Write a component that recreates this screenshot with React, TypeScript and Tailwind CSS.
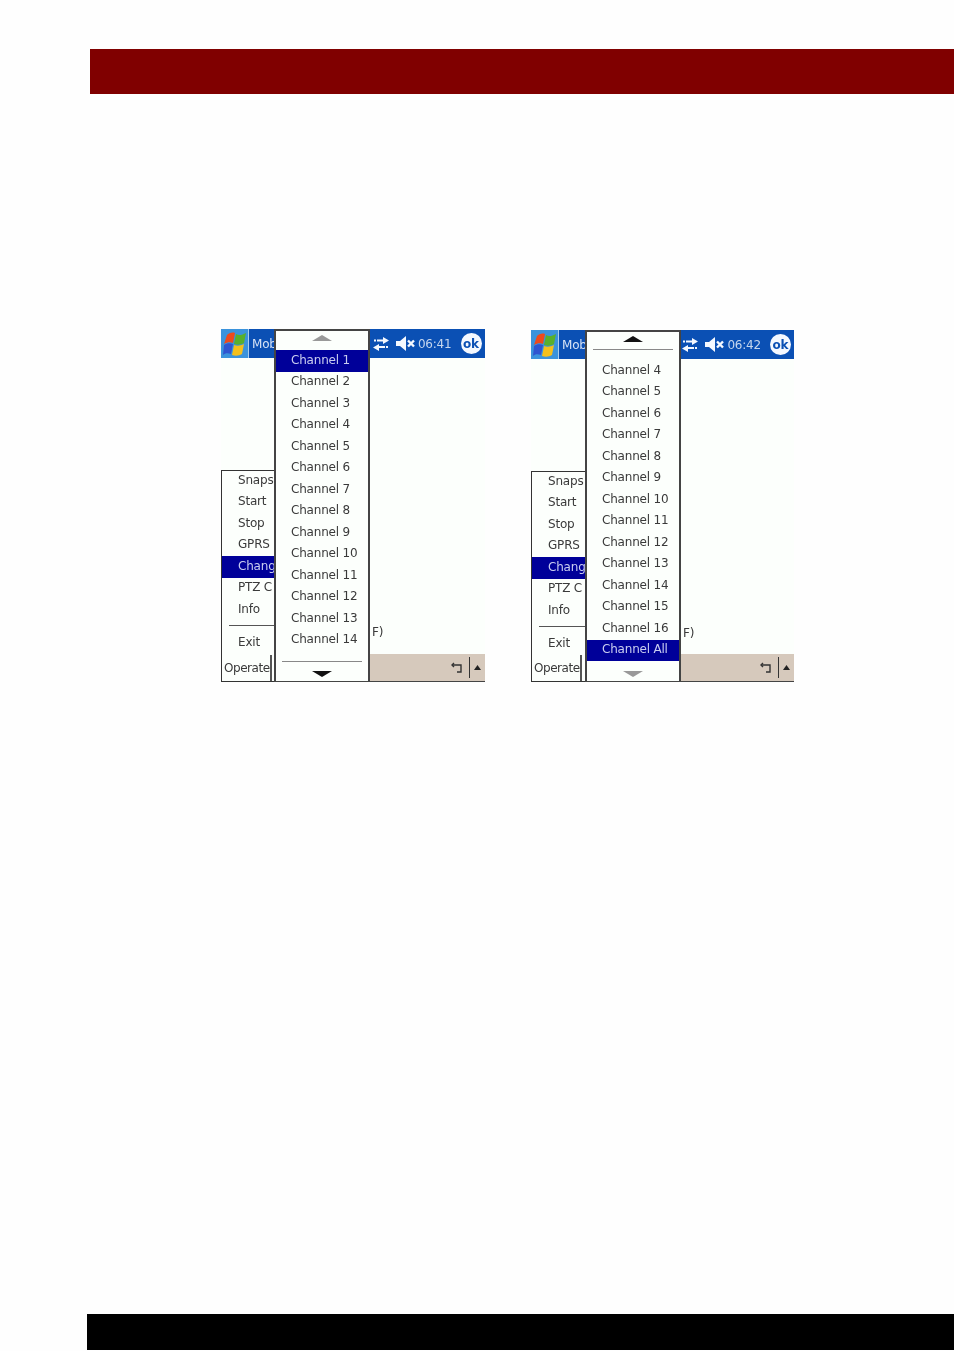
import { ReactNode } from "react";

type ScreenProps = {
  time: string;
  outerClass: string;
  wide?: boolean;
  menu: ReactNode;
};

// only the part of each label that is not behind the channel menu
const leftItems = ["Snaps", "Start", "Stop", "GPRS", "Chang", "PTZ C", "Info"];

function WindowsLogo() {
  return (
    <svg width="23" height="24" viewBox="0 0 23 24">
      <path d="M4 3 C6 1 9 0 12 1 L10 11 C8 10 4 10 1 12 Z" fill="#ee4a1c" />
      <path d="M13 2 C16 4 19 3 23 1 L21 11 C18 13 14 13 11 12 Z" fill="#58b02c" />
      <path d="M1 13 C4 11 7 11 10 12 L8 22 C5 21 2 21 0 23 Z" fill="#2f55d0" />
      <path d="M11 13 C14 14 17 14 21 12 L19 22 C16 24 12 24 9 23 Z" fill="#f4c01c" />
    </svg>
  );
}

function SyncIcon() {
  return (
    <svg width="16" height="14" viewBox="0 0 16 14" fill="#f4f8ff">
      <path d="M1 2.5 H3 V4.5 H1 Z M4 2.5 H10 V0 L16 3.5 L10 7 V4.5 H4 Z" />
      <path d="M15 9 H13 V11 H15 Z M12 9 H6 V7 L0 10.5 L6 14 V11 H12 Z" />
    </svg>
  );
}

function MuteIcon() {
  return (
    <svg width="19" height="15" viewBox="0 0 19 15" fill="#f4f8ff">
      <path d="M0 5 H4 L10 0 V15 L4 10 H0 Z" />
      <path d="M12 4.5 L18 10.5 M18 4.5 L12 10.5" stroke="#f4f8ff" strokeWidth="2.4" />
    </svg>
  );
}

function ReturnIcon() {
  return (
    <svg width="12" height="12" viewBox="0 0 12 12" fill="none" stroke="#333" strokeWidth="1.4">
      <path d="M1 3 H10 V10 H6" />
      <path d="M3 1 L1 3 L3 5" />
    </svg>
  );
}

function Arrow({ up, color }: { up?: boolean; color: string }) {
  return (
    <svg width="20" height="6" viewBox="0 0 20 6" fill={color}>
      <path d={up ? "M0 6 H20 L10 0 Z" : "M0 0 H20 L10 6 Z"} />
    </svg>
  );
}

function ChannelRow({ label, active }: { label: string; active?: boolean }) {
  return (
    <div
      className={`h-[21.5px] pl-[15px] pb-[2px] flex items-center ${
        active ? "bg-[#000099] text-[#c9cdf0]" : "text-[#3a3a3a]"
      }`}
    >
      {label}
    </div>
  );
}

function Screen({ time, outerClass, wide, menu }: ScreenProps) {
  return (
    <div
      className={`relative flex flex-col bg-[#fcfffc] text-[12px] leading-none font-['DejaVu_Sans',sans-serif] tracking-[-0.2px] blur-[0.35px] ${outerClass}`}
    >
      <div className="h-[29px] shrink-0 flex items-center bg-[#0b50b4] text-white">
        <div className="w-[28px] h-full bg-[#3b93dc] border-r border-[#a9cdee] flex items-center justify-center">
          <WindowsLogo />
        </div>
        <span className="ml-[3px] pt-px text-[#d5e2f5]">Mob</span>
        <div className="ml-auto flex items-center">
          <SyncIcon />
          <div className="ml-[7px]">
            <MuteIcon />
          </div>
          <span className="ml-[3px] pt-px text-[#c5d6ee]">{time}</span>
          <span className="ml-[9px] mr-[3px] w-[21px] h-[21px] rounded-full bg-[#f4f8ff] text-[#0b50b4] font-bold text-[12px] flex items-center justify-center">
            ok
          </span>
        </div>
      </div>

      <div className="flex-1 relative">
        <span className={`absolute top-[268px] text-[#3a3a3a] ${wide ? "left-[152px]" : "left-[151px]"}`}>F)</span>
      </div>

      <div className="h-[28px] shrink-0 bg-[#d6c9bc] border-b border-[#444] flex items-center justify-end">
        <ReturnIcon />
        <div className="ml-[6px] w-px h-[21px] bg-[#333]" />
        <svg className="ml-[4px] mr-[4px]" width="7" height="5" viewBox="0 0 7 5" fill="#222">
          <path d="M0 5 H7 L3.5 0 Z" />
        </svg>
      </div>

      <div
        className={`absolute left-0 top-[141px] bottom-0 bg-[#fcfffc] border-l-[1.5px] border-t-[1.5px] border-b border-[#333] text-[#3a3a3a] ${
          wide ? "w-[54px]" : "w-[53px]"
        }`}
      >
        <div className="-mt-px">
          {leftItems.map((item) => (
            <div
              key={item}
              className={`h-[21.5px] pl-[16px] pb-[2px] flex items-center whitespace-nowrap ${
                item === "Chang" ? "bg-[#000099] text-[#c9cdf0]" : ""
              }`}
            >
              {item}
            </div>
          ))}
        </div>
        <div className="mt-[4px] ml-[7px] h-px bg-[#555]" />
        <div className="mt-[6px] h-[21px] pl-[16px] flex items-center">Exit</div>
        <div className="absolute left-0 bottom-0 w-[50px] h-[26px] pl-[2px] flex items-center border-r-2 border-[#555] bg-[#fcfffc] tracking-[-0.45px]">
          Operate
        </div>
      </div>

      {menu}
    </div>
  );
}

function MenuFirst() {
  const rows = Array.from({ length: 14 }, (_, i) => `Channel ${i + 1}`);
  return (
    <div className="absolute left-[53px] top-0 bottom-0 w-[96px] flex flex-col bg-[#fcfffc] border-x-2 border-t-2 border-b border-[#444]">
      <div className="h-[19px] flex items-start justify-center pt-[4px]">
        <Arrow up color="#999" />
      </div>
      {rows.map((r, i) => (
        <ChannelRow key={r} label={r} active={i === 0} />
      ))}
      <div className="mt-[10px] mx-[6px] h-px bg-[#888]" />
      <div className="mt-[9px] flex justify-center">
        <Arrow color="#111" />
      </div>
    </div>
  );
}

function MenuSecond() {
  const rows = [...Array.from({ length: 13 }, (_, i) => `Channel ${i + 4}`), "Channel All"];
  return (
    <div className="absolute left-[54px] top-0 bottom-0 w-[96px] flex flex-col bg-[#fcfffc] border-x-2 border-t-2 border-b border-[#444]">
      <div className="h-[17px] flex items-start justify-center pt-[4px]">
        <Arrow up color="#111" />
      </div>
      <div className="mx-[6px] h-px bg-[#888]" />
      <div className="h-[10px]" />
      {rows.map((r, i) => (
        <ChannelRow key={r} label={r} active={i === 13} />
      ))}
      <div className="mt-[10px] flex justify-center">
        <Arrow color="#999" />
      </div>
    </div>
  );
}

export default function App() {
  return (
    <div className="w-[954px] h-[1351px] bg-[#fefefe] flex flex-col overflow-hidden">
      <div className="mt-[49px] ml-[90px] h-[45px] shrink-0 bg-[#800000]" />
      <div className="mt-[235px] ml-[221px] flex items-start gap-[46.5px]">
        <Screen time="06:41" outerClass="w-[263.5px] h-[353px]" menu={<MenuFirst />} />
        <Screen time="06:42" outerClass="w-[263px] h-[352px] mt-px" wide menu={<MenuSecond />} />
      </div>
      <div className="mt-auto mb-px ml-[87px] h-[36px] shrink-0 bg-black" />
    </div>
  );
}
